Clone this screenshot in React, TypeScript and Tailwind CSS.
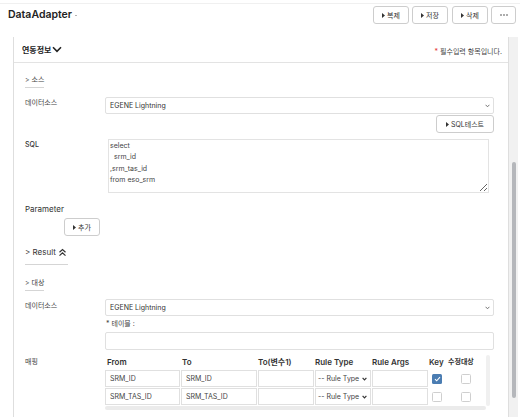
import React from "react";

const Tri = () => (
  <svg width="3" height="5" viewBox="0 0 3 5" className="shrink-0">
    <path d="M0 0L3 2.5L0 5Z" fill="#333" />
  </svg>
);

const SmallChevron = ({ dark }: { dark?: boolean }) => (
  <svg width="5" height="4" viewBox="0 0 5 4" className="shrink-0">
    <path
      d="M0.6 0.8L2.5 2.8L4.4 0.8"
      fill="none"
      stroke={dark ? "#333" : "#666"}
      strokeWidth={dark ? 1.2 : 0.9}
    />
  </svg>
);

const Btn = ({ label, w }: { label: string; w: string }) => (
  <button
    className={
      "flex h-[18px] items-center justify-center gap-[2px] rounded-[3px] border border-[#cdcdcd] bg-white text-[7px] leading-none text-[#333] " +
      w
    }
  >
    <Tri />
    <span>{label}</span>
  </button>
);

const Check = ({ on }: { on?: boolean }) =>
  on ? (
    <span className="flex h-[10px] w-[10px] items-center justify-center rounded-[1.5px] bg-[#4b7db2]">
      <svg width="7" height="6" viewBox="0 0 7 6">
        <path d="M1 3.2L2.7 4.8L6 1.2" fill="none" stroke="#fff" strokeWidth="1.1" />
      </svg>
    </span>
  ) : (
    <span className="block h-[10px] w-[10px] rounded-[1.5px] border border-[#cfcfcf] bg-white" />
  );

const Cell = ({ text, w }: { text?: string; w: string }) => (
  <div
    className={
      "flex h-[17px] items-center border border-[#e0e0e0] pl-[4px] text-[7px] text-[#444] " + w
    }
  >
    {text}
  </div>
);

const RuleSel = () => (
  <div className="flex h-[17px] w-[56px] items-center justify-between border border-[#e0e0e0] pl-[2px] pr-[3px] text-[7px] text-[#444]">
    <span>-- Rule Type</span>
    <SmallChevron dark />
  </div>
);

const Row = ({ a, on }: { a: string; on?: boolean }) => (
  <div className="flex h-[17px] items-center gap-[1px]">
    <Cell text={a} w="w-[75px]" />
    <Cell text={a} w="w-[76px]" />
    <Cell w="w-[56px]" />
    <RuleSel />
    <Cell w="w-[56px]" />
    <div className="flex w-[18px] pl-[3px]">
      <Check on={on} />
    </div>
    <div className="flex pl-[13px]">
      <Check />
    </div>
  </div>
);

export default function App() {
  return (
    <div className="h-[417px] w-[520px] overflow-hidden bg-white font-['Inter','Noto_Sans_CJK_KR',sans-serif] text-[#333]">
      <div className="h-[4px] border-b border-[#f0f0f0]" />
      <div className="mt-[2px] flex h-[18px] items-center justify-between pl-[8px] pr-[4px]">
        <div className="flex items-center">
          <span className="text-[10.5px] font-semibold leading-none text-[#222]">DataAdapter</span>
          <span className="ml-[3px] mt-[1px] block h-[1.5px] w-[1.5px] rounded-full bg-[#aaa]" />
        </div>
        <div className="flex items-center gap-[3px]">
          <Btn label="복제" w="w-[36px]" />
          <Btn label="저장" w="w-[36px]" />
          <div className="ml-[1px]">
            <Btn label="삭제" w="w-[36px]" />
          </div>
          <button className="flex h-[18px] w-[25px] items-center justify-center rounded-[3px] border border-[#cdcdcd] bg-white">
            <svg width="8" height="2" viewBox="0 0 8 2">
              <circle cx="1" cy="1" r="0.75" fill="#333" />
              <circle cx="4" cy="1" r="0.75" fill="#333" />
              <circle cx="7" cy="1" r="0.75" fill="#333" />
            </svg>
          </button>
        </div>
      </div>

      <div className="mt-[13px] flex h-[380px]">
        <div className="ml-[13px] w-[496px] overflow-hidden border-l border-r border-[#dedede]">
          <div className="flex h-[26px] items-center justify-between border-b border-[#e3e3e3] pl-[8px] pr-[6px]">
            <div className="flex items-center gap-[1px]">
              <span className="text-[8px] font-bold leading-none text-[#222]">연동정보</span>
              <svg width="10" height="7" viewBox="0 0 10 7">
                <path d="M1 1.3L5 5.3L9 1.3" fill="none" stroke="#222" strokeWidth="1.6" />
              </svg>
            </div>
            <span className="mt-[3px] text-[7px] leading-none text-[#444]">
              <span className="text-[#e53935]">*</span> 필수입력 항목입니다.
            </span>
          </div>

          <div className="pl-[11px] pr-[14px] pt-[12px] text-[7px] leading-[10px]">
            <div className="w-fit border-b border-[#d5d5d5] pb-[2px] text-[7px] leading-[10px] text-[#444]">
              &gt; 소스
            </div>

            <div className="mt-[9px] flex items-start">
              <div className="w-[80px] pt-[1px] text-[7px] leading-[10px] text-[#444]">데이터소스</div>
              <div className="flex h-[17px] flex-1 items-center justify-between rounded-[2px] border border-[#e0e0e0] pl-[4px] pr-[3px] text-[7px] text-[#333]">
                <span>EGENE Lightning</span>
                <SmallChevron />
              </div>
            </div>

            <div className="mt-[1px] flex justify-end">
              <Btn label="SQL테스트" w="w-[58px]" />
            </div>

            <div className="mt-[6px] flex items-start">
              <div className="w-[80px] pt-[1px] text-[7px] font-medium leading-[10px] text-[#333]">SQL</div>
              <textarea
                readOnly
                value={"select\n  srm_id\n,srm_tas_id\nfrom eso_srm"}
                className="ml-[3px] block h-[54px] w-[381px] border border-[#e3e3e3] px-[1px] py-0 text-[7px] leading-[11.3px] text-[#444] outline-none"
              />
            </div>

            <div className="mt-[11px] text-[8px] leading-[10px] text-[#333]">Parameter</div>
            <div className="ml-[39px] mt-[4px] w-fit">
              <Btn label="추가" w="w-[36px]" />
            </div>

            <div className="mt-[10px] flex w-fit items-center gap-[2px] border-b border-[#d5d5d5] pb-[7px] pr-[1px] text-[8px] leading-[10px] text-[#333]">
              <span>&gt; Result</span>
              <svg width="9" height="9" viewBox="0 0 9 9" className="mt-[2px]">
                <path d="M1.5 4.2L4.5 1.5L7.5 4.2" fill="none" stroke="#333" strokeWidth="1.2" />
                <path d="M1.5 7.6L4.5 4.9L7.5 7.6" fill="none" stroke="#333" strokeWidth="1.2" />
              </svg>
            </div>

            <div className="mt-[13px] w-fit border-b border-[#d5d5d5] pb-[2px] text-[7px] leading-[10px] text-[#444]">
              &gt; 대상
            </div>

            <div className="mt-[8px] flex items-start">
              <div className="w-[80px] pt-[2px] text-[7px] leading-[10px] text-[#444]">데이터소스</div>
              <div className="flex-1">
                <div className="flex h-[17px] items-center justify-between rounded-[2px] border border-[#e0e0e0] pl-[4px] pr-[3px] text-[7px] text-[#333]">
                  <span>EGENE Lightning</span>
                  <SmallChevron />
                </div>
                <div className="ml-[1px] mt-[3px] text-[7px] leading-[10px] text-[#444]">* 테이블 :</div>
                <div className="mt-[3px] h-[18px] rounded-[2px] border border-[#e0e0e0]" />
              </div>
            </div>

            <div className="mt-[4px] flex items-start">
              <div className="w-[80px] pt-[3px] text-[7px] leading-[10px] text-[#444]">매핑</div>
              <div className="flex w-[385px]">
                <div className="w-[381px]">
                  <div className="flex h-[16px] items-center text-[8px] font-semibold text-[#333]">
                    <span className="w-[76px] pl-[2px]">From</span>
                    <span className="w-[77px] pl-[1px]">To</span>
                    <span className="w-[57px]">To(변수1)</span>
                    <span className="w-[57px]">Rule Type</span>
                    <span className="w-[57px]">Rule Args</span>
                    <span className="w-[19px]">Key</span>
                    <span className="text-[7px]">수정대상</span>
                  </div>
                  <div className="flex flex-col gap-[1px]">
                    <Row a="SRM_ID" on />
                    <Row a="SRM_TAS_ID" />
                  </div>
                  <div className="mt-[1px] h-[4px] rounded-[2px] bg-[#ebebeb]" />
                </div>
                <div className="mt-[1px] h-[51px] w-[4px] rounded-[2px] bg-[#f0f0f0]" />
              </div>
            </div>
          </div>
        </div>
        <div className="w-[9px] bg-[#f1f1f1]">
          <div className="ml-[2.5px] mt-[125px] h-[236px] w-[4.5px] rounded-full bg-[#b5b7bb]" />
        </div>
      </div>
    </div>
  );
}
